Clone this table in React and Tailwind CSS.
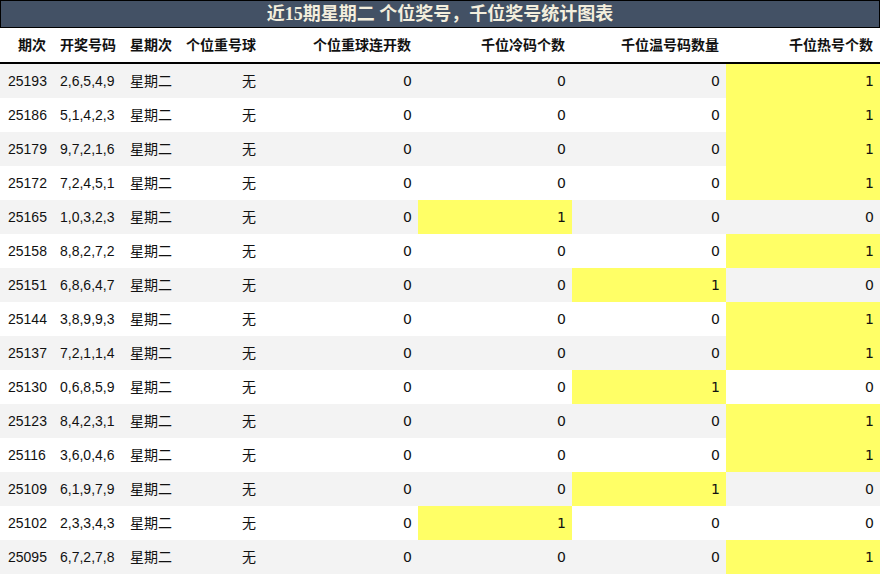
import React from "react";

const rows = [
  ["25193", "2,6,5,4,9", 0, 0, 0, 1],
  ["25186", "5,1,4,2,3", 0, 0, 0, 1],
  ["25179", "9,7,2,1,6", 0, 0, 0, 1],
  ["25172", "7,2,4,5,1", 0, 0, 0, 1],
  ["25165", "1,0,3,2,3", 0, 1, 0, 0],
  ["25158", "8,8,2,7,2", 0, 0, 0, 1],
  ["25151", "6,8,6,4,7", 0, 0, 1, 0],
  ["25144", "3,8,9,9,3", 0, 0, 0, 1],
  ["25137", "7,2,1,1,4", 0, 0, 0, 1],
  ["25130", "0,6,8,5,9", 0, 0, 1, 0],
  ["25123", "8,4,2,3,1", 0, 0, 0, 1],
  ["25116", "3,6,0,4,6", 0, 0, 0, 1],
  ["25109", "6,1,9,7,9", 0, 0, 1, 0],
  ["25102", "2,3,3,4,3", 0, 1, 0, 0],
  ["25095", "6,7,2,7,8", 0, 0, 0, 1],
];

const grid = "grid grid-cols-[53px_70px_56px_84px_155px_154px_154px_154px]";
const numFont = "font-['DejaVu_Sans',sans-serif] text-[14px]";

const NumCell = ({ v }) => (
  <div
    className={`flex items-center justify-end pl-[7px] pr-[6px] pt-[1px] ${numFont} ${
      v === 1 ? "bg-[#ffff66]" : ""
    }`}
  >
    {v}
  </div>
);

const App = () => {
  return (
    <div className="w-[880px] h-[575px] overflow-hidden bg-white text-[#111] font-['Liberation_Sans','Noto_Sans_CJK_SC',sans-serif]">
      <div className="h-[28px] bg-[#435165] border border-black flex items-center justify-center">
        <span className="text-[18px] font-bold text-[#f3eedd] font-['Liberation_Serif','Noto_Sans_CJK_SC',serif] leading-none">
          近15期星期二 个位奖号，千位奖号统计图表
        </span>
      </div>
      <div className={`${grid} h-[36px] border-b-2 border-black text-[14px] font-bold`}>
        {["期次", "开奖号码", "星期次", "个位重号球", "个位重球连开数", "千位冷码个数", "千位温号码数量", "千位热号个数"].map(
          (h) => (
            <div key={h} className="flex items-center justify-end px-[7px] pt-[1px] whitespace-nowrap">
              {h}
            </div>
          )
        )}
      </div>
      {rows.map((r, i) => (
        <div
          key={r[0]}
          className={`${grid} h-[34px] text-[14px] ${i % 2 === 0 ? "bg-[#f3f3f3]" : "bg-white"}`}
        >
          <div className="flex items-center pl-[8px] pt-[1px]">{r[0]}</div>
          <div className="flex items-center px-[7px] pt-[1px]">{r[1]}</div>
          <div className="flex items-center px-[7px] pt-[1px]">星期二</div>
          <div className="flex items-center justify-end px-[7px] pt-[1px]">无</div>
          <NumCell v={r[2]} />
          <NumCell v={r[3]} />
          <NumCell v={r[4]} />
          <NumCell v={r[5]} />
        </div>
      ))}
    </div>
  );
};

export default App;
